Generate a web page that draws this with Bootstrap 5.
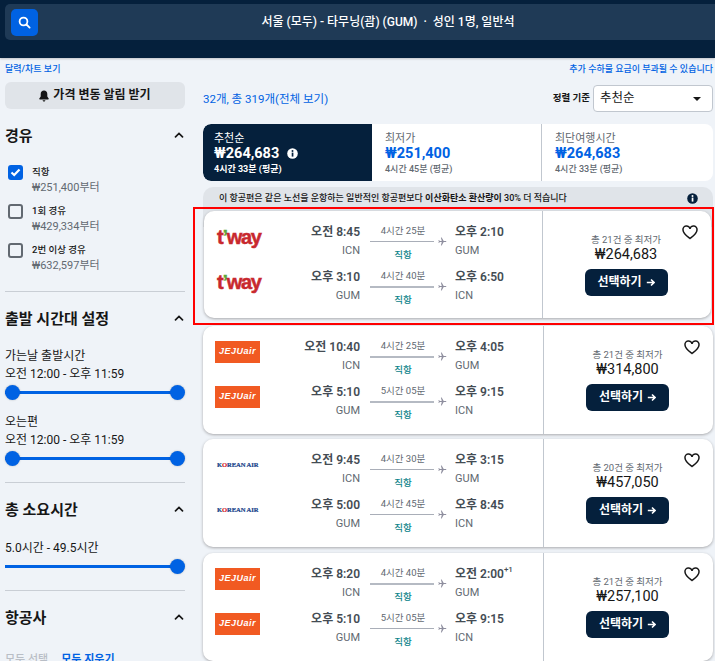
<!DOCTYPE html>
<html lang="ko">
<head>
<meta charset="utf-8">
<title>항공권 검색 결과</title>
<link href="https://cdn.jsdelivr.net/npm/bootstrap@5.3.0/dist/css/bootstrap.min.css" rel="stylesheet">
<style>
html,body{height:661px;overflow:hidden}
body{background:#eff3f8;color:#161616;font-family:Roboto,"Noto Sans CJK KR","Liberation Sans",sans-serif;font-size:12px;line-height:1.3}
.top-band{background:#05203c;height:58px;padding:4px 0 0 5px;box-shadow:0 1px 2px rgba(0,0,0,.2)}
.top-bar{background:#1f3a56;height:36px;border-radius:5px 0 0 5px;padding:5px 6px}
.search-btn{width:27px;height:27px;background:#0062e3;border-radius:5px;border:0;padding:0}
.route{color:#fff;font-size:12px;font-weight:500;margin-left:29px;padding-top:2px}
.links{padding:6px 2px 0 5px;height:24px;font-size:9px;font-weight:500;color:#0062e3}
.page-cols{padding:0 2px 0 5px}
.side{width:180px;flex:none}
.main-col{width:510px;margin-left:18px;flex:none}
.alert-btn{height:27px;background:#e0e4e9;border-radius:6px;font-size:12px;font-weight:700}
.side-head{height:22px;font-size:15px;font-weight:700;margin-top:15px}
.side-head span{padding-top:3px}
.chev{margin-right:1px}
.stops{margin-top:19px}
.stop{height:39px;padding-left:3px}
.chk{width:15px;height:15px;border:2px solid #626971;border-radius:3px;flex:none}
.chk-on{background:#0062e3;border-color:#0062e3}
.stop-text{margin-left:9px;font-size:9.5px;font-weight:500;line-height:14px}
.stop-price{font-size:11px;font-weight:400;color:#626971;line-height:17px}
.side-rule{border-top:1px solid #c9ced5;margin:0;opacity:1}
.rule-stops{margin-top:9px}
.label-line{font-size:12px;line-height:18px}
.first-label{margin-top:18px}
.next-label{margin-top:13px}
.total-label{margin-top:19px}
.range{height:15px;margin-top:2px}
.range-track{height:3px;background:#0062e3;top:6px;left:0;right:5px}
.range-knob{width:15px;height:15px;background:#0062e3;border-radius:50%;top:0;box-shadow:0 0 2px rgba(0,0,0,.25)}
.knob-left{left:0}
.knob-right{right:0}
.muted-link{color:#b9bec6;font-size:11px;font-weight:500}
.blue-link{color:#0062e3;font-size:11px;font-weight:700;margin-left:13px}
.count{font-size:11.5px;color:#0062e3;margin-top:10px}
.sort-row{margin-top:3px}
.sort-label{font-size:9.5px;font-weight:700;margin-right:3px}
.sort-box{width:120px;height:27px;background:#fff;border:1px solid #c1c7cf;border-radius:4px;font-size:12.5px;padding:0 11px 0 6px}
.caret{width:0;height:0;border-left:4px solid transparent;border-right:4px solid transparent;border-top:4px solid #161616}
.tabs{margin-top:12px;height:57px;background:#fff;border-radius:8px;overflow:hidden}
.tab-one{width:169px;background:#05203c;color:#fff;padding:8px 11px 0;border-radius:8px 0 0 8px}
.tab-two{width:170px;padding:8px 13px 0;border-right:1px solid #c1c7cf}
.tab-three{flex:1;padding:8px 13px 0}
.tab-title{font-size:11px;line-height:13px;color:#626971}
.tab-one .tab-title{color:#fff}
.tab-price{font-size:14.5px;font-weight:700;line-height:17px;color:#0062e3}
.tab-one .tab-price{color:#fff}
.tab-sub{font-size:9px;line-height:13px;color:#626971;font-weight:500;margin-top:1px}
.tab-one .tab-sub{color:#fff;font-weight:700}
.notice{background:#e0e4e9;border-radius:10px 10px 0 0;margin-top:6px;height:40px;padding:6px 15px 0 16px;font-size:9px;font-weight:500}
.notice b{font-weight:700}
.flagged{margin-top:-16px;margin-bottom:8px;position:relative}
.flagged::after{content:"";position:absolute;left:-10px;right:-1px;top:-4px;bottom:-7px;border:2px solid #f00;pointer-events:none}
.flight{background:#fff;border-radius:10px;height:108px;box-shadow:0 1px 3px rgba(37,32,31,.35);margin-bottom:6px;color:#161616}
.flight-tight{margin-bottom:5px}
.flagged .flight{margin:0 2px 0 1px;height:107px}
.flagged .legs{padding-left:11px}
.legs{flex:1;padding:12px 0 0 12px}
.leg{height:45px}
.logo-slot{width:45px;flex:none}
.logo-box{height:28px}
.dep{width:100px;flex:none;text-align:right}
.time{font-size:12px;font-weight:600;color:#444c54;line-height:18px;white-space:nowrap}
.code{font-size:11px;color:#626971;line-height:18px;margin-top:1px}
.mid{width:77px;margin:0 8px 0 10px;flex:none}
.dur{font-size:9.5px;color:#626971;text-align:center;width:66px;line-height:13px;margin-top:1px}
.line-row{height:9px}
.line-bar{width:66px;height:1px;background:#a9aeb8}
.line-heavy{height:2px;background:#b5bac3}
.direct{font-size:9.5px;color:#0c838a;text-align:center;width:66px;font-weight:500;line-height:13px;margin-top:2px}
.sup{font-size:8px;vertical-align:6px;font-weight:500;line-height:0}
.buy{width:170px;flex:none;border-left:1px solid #c1c7cf;padding:22px 2px 0 0}
.flagged .buy{width:169px}
.buy-note{font-size:9.5px;color:#626971;line-height:13px}
.buy-price{font-size:14.5px;line-height:18px;color:#161616}
.buy-btn{width:83px;height:27px;background:#05203c;color:#fff;border:0;border-radius:6px;font-size:12px;font-weight:700;padding:0;margin-top:5px}
.heart{position:absolute;top:14px;right:13px}
.logo-tway{font-family:"Liberation Sans",sans-serif;font-weight:700;font-size:20px;letter-spacing:-1.300px;color:#c8282e;line-height:1;margin-left:2px;-webkit-text-stroke:.5px #c8282e}
.logo-tway i{color:#5da83a;font-style:normal;-webkit-text-stroke:.3px #5da83a}
.logo-jeju{width:45px;height:22px;background:#f15a22;color:#fff;font-family:"Liberation Sans",sans-serif;font-weight:700;font-style:italic;font-size:9px;letter-spacing:.5px;margin-top:3px}
.logo-ke{font-family:"Liberation Serif",serif;font-weight:700;font-size:6.6px;color:#173f8a;white-space:nowrap;margin-left:2px;letter-spacing:-.1px;-webkit-text-stroke:.2px #173f8a}
.logo-ke i{font-style:normal;color:#d8232a;-webkit-text-stroke:.2px #d8232a}
</style>
</head>
<body>
<header class="top-band">
  <div class="top-bar d-flex align-items-center">
    <button class="search-btn d-flex align-items-center justify-content-center" aria-label="검색">
      <svg width="13" height="13" viewBox="0 0 13 13" fill="none" stroke="#fff" stroke-width="1.8"><circle cx="5.5" cy="5.5" r="3.9"/><path d="M8.5 8.5 11.6 11.6" stroke-linecap="round"/></svg>
    </button>
    <div class="route flex-grow-1 text-center">서울 (모두) - 타무닝(괌) (GUM) &nbsp;·&nbsp; 성인 1명, 일반석</div>
  </div>
</header>

<div class="links d-flex justify-content-between"><span>달력/차트 보기</span><span>추가 수하물 요금이 부과될 수 있습니다</span></div>

<div class="page-cols d-flex">
  <aside class="side">
    <div class="alert-btn d-flex align-items-center justify-content-center gap-1">
      <svg width="10" height="12" viewBox="0 0 10 12" fill="#161616"><path d="M5 0.5C3 .5 1.7 2 1.7 4v2.6L.3 8.6c-.2.4 0 .8.5.8h8.4c.5 0 .7-.4.5-.8L8.3 6.6V4C8.3 2 7 .5 5 .5z"/><path d="M3.6 10.2h2.8C6.3 11 5.7 11.5 5 11.5S3.700 11 3.600 10.200z"/></svg>
      <span>가격 변동 알림 받기</span>
    </div>

    <div class="side-head d-flex justify-content-between align-items-center"><span>경유</span>
      <svg width="10" height="6" viewBox="0 0 10 6" fill="none" stroke="#161616" stroke-width="1.7" class="chev"><path d="M1.500 4.800 5 1.500 8.500 4.800" stroke-linecap="round"/></svg></div>

    <div class="stops">
    <div class="stop d-flex">
      <div class="chk chk-on d-flex align-items-center justify-content-center"><svg width="11" height="9" viewBox="0 0 11 9" fill="none" stroke="#fff" stroke-width="2.2"><path d="M1.500 4.500 4.200 7 9.500 1.500"/></svg></div>
      <div class="stop-text">직항<div class="stop-price">₩251,400부터</div></div>
    </div>
    <div class="stop d-flex">
      <div class="chk"></div>
      <div class="stop-text">1회 경유<div class="stop-price">₩429,334부터</div></div>
    </div>
    <div class="stop d-flex">
      <div class="chk"></div>
      <div class="stop-text">2번 이상 경유<div class="stop-price">₩632,597부터</div></div>
    </div>
    </div>
    <hr class="side-rule rule-stops">

    <div class="side-head d-flex justify-content-between align-items-center"><span>출발 시간대 설정</span>
      <svg width="10" height="6" viewBox="0 0 10 6" fill="none" stroke="#161616" stroke-width="1.7" class="chev"><path d="M1.500 4.800 5 1.500 8.500 4.800" stroke-linecap="round"/></svg></div>

    <div class="label-line first-label">가는날 출발시간</div>
    <div class="label-line">오전 12:00 - 오후 11:59</div>
    <div class="range position-relative"><div class="range-track position-absolute"></div><div class="range-knob position-absolute knob-left"></div><div class="range-knob position-absolute knob-right"></div></div>

    <div class="label-line next-label">오는편</div>
    <div class="label-line">오전 12:00 - 오후 11:59</div>
    <div class="range position-relative"><div class="range-track position-absolute"></div><div class="range-knob position-absolute knob-left"></div><div class="range-knob position-absolute knob-right"></div></div>
    <hr class="side-rule mt-3">

    <div class="side-head d-flex justify-content-between align-items-center"><span>총 소요시간</span>
      <svg width="10" height="6" viewBox="0 0 10 6" fill="none" stroke="#161616" stroke-width="1.7" class="chev"><path d="M1.500 4.800 5 1.500 8.500 4.800" stroke-linecap="round"/></svg></div>

    <div class="label-line total-label">5.0시간 - 49.5시간</div>
    <div class="range position-relative"><div class="range-track position-absolute"></div><div class="range-knob position-absolute knob-right"></div></div>
    <hr class="side-rule mt-3">

    <div class="side-head d-flex justify-content-between align-items-center"><span>항공사</span>
      <svg width="10" height="6" viewBox="0 0 10 6" fill="none" stroke="#161616" stroke-width="1.7" class="chev"><path d="M1.500 4.800 5 1.500 8.500 4.800" stroke-linecap="round"/></svg></div>
    <div class="mt-3 pt-2"><span class="muted-link">모두 선택</span><span class="blue-link">모두 지우기</span></div>
  </aside>

  <main class="main-col">
    <div class="d-flex justify-content-between">
      <div class="count">32개, 총 319개(전체 보기)</div>
      <div class="d-flex align-items-center sort-row">
        <span class="sort-label">정렬 기준</span>
        <div class="sort-box d-flex align-items-center justify-content-between"><span>추천순</span><span class="caret"></span></div>
      </div>
    </div>

    <div class="tabs d-flex">
      <div class="tab-one">
        <div class="tab-title">추천순</div>
        <div class="tab-price d-flex align-items-center gap-1">₩264,683
          <svg width="11" height="11" viewBox="0 0 11 11" class="ms-1"><circle cx="5.500" cy="5.500" r="5.300" fill="#fff"/><rect x="4.700" y="4.600" width="1.700" height="4" fill="#05203c"/><circle cx="5.500" cy="2.900" r="1" fill="#05203c"/></svg></div>
        <div class="tab-sub">4시간 33분 (평균)</div>
      </div>
      <div class="tab-two">
        <div class="tab-title">최저가</div>
        <div class="tab-price">₩251,400</div>
        <div class="tab-sub">4시간 45분 (평균)</div>
      </div>
      <div class="tab-three">
        <div class="tab-title">최단여행시간</div>
        <div class="tab-price">₩264,683</div>
        <div class="tab-sub">4시간 33분 (평균)</div>
      </div>
    </div>

    <div class="notice d-flex justify-content-between">
      <span>이 항공편은 같은 노선을 운항하는 일반적인 항공편보다 <b>이산화탄소 환산량이</b> 30% 더 적습니다</span>
      <svg width="11" height="11" viewBox="0 0 11 11"><circle cx="5.500" cy="5.500" r="5.300" fill="#05203c"/><rect x="4.700" y="4.600" width="1.700" height="4" fill="#fff"/><circle cx="5.500" cy="2.900" r="1" fill="#fff"/></svg>
    </div>

    <div class="flagged">
      <article class="flight d-flex position-relative">
        <div class="legs">
          <div class="leg d-flex">
            <div class="logo-slot d-flex align-items-center logo-box"><span class="logo-tway">t<i>’</i>way</span></div>
            <div class="dep"><div class="time">오전 8:45</div><div class="code">ICN</div></div>
            <div class="mid"><div class="dur">4시간 25분</div><div class="line-row d-flex align-items-center gap-1"><div class="line-bar"></div><svg width="9" height="9" viewBox="0 0 10 10" fill="#8e8e9e"><path d="M9.600 5c0-.4-.5-.7-1-.7H6.500L4.200.3H3.300l1 4H2L1.200 3.300H.5L1 5 .5 6.700h.7L2 5.700h2.300l-1 4h.9l2.300-4h2.100c.5 0 1-.3 1-.7z"/></svg></div><div class="direct">직항</div></div>
            <div><div class="time">오후 2:10</div><div class="code">GUM</div></div>
          </div>
          <div class="leg d-flex">
            <div class="logo-slot d-flex align-items-center logo-box"><span class="logo-tway">t<i>’</i>way</span></div>
            <div class="dep"><div class="time">오후 3:10</div><div class="code">GUM</div></div>
            <div class="mid"><div class="dur">4시간 40분</div><div class="line-row d-flex align-items-center gap-1"><div class="line-bar line-heavy"></div><svg width="9" height="9" viewBox="0 0 10 10" fill="#8e8e9e"><path d="M9.600 5c0-.4-.5-.7-1-.7H6.500L4.200.3H3.300l1 4H2L1.200 3.300H.5L1 5 .5 6.700h.7L2 5.700h2.300l-1 4h.9l2.300-4h2.100c.5 0 1-.3 1-.7z"/></svg></div><div class="direct">직항</div></div>
            <div><div class="time">오후 6:50</div><div class="code">ICN</div></div>
          </div>
        </div>
        <div class="buy d-flex flex-column align-items-center">
          <div class="buy-note">총 21건 중 최저가</div>
          <div class="buy-price">₩264,683</div>
          <button class="buy-btn d-inline-flex align-items-center justify-content-center gap-1">선택하기<svg width="9" height="9" viewBox="0 0 9 9" fill="none" stroke="#fff" stroke-width="1.600"><path d="M.8 4.500h7M5 1.500l3 3-3 3"/></svg></button>
        </div>
        <svg class="heart" width="16" height="15" viewBox="0 0 16 15" fill="none" stroke="#161616" stroke-width="1.500"><path d="M8 13.500C5 11.200 1 8.500 1 5a3.500 3.500 0 0 1 7-1 3.500 3.500 0 0 1 7 1c0 3.500-4 6.200-7 8.500z"/></svg>
      </article>
    </div>

    <article class="flight flight-tight d-flex position-relative">
      <div class="legs">
        <div class="leg d-flex">
          <div class="logo-slot"><div class="logo-jeju d-flex align-items-center justify-content-center">JEJUair</div></div>
          <div class="dep"><div class="time">오전 10:40</div><div class="code">ICN</div></div>
          <div class="mid"><div class="dur">4시간 25분</div><div class="line-row d-flex align-items-center gap-1"><div class="line-bar line-heavy"></div><svg width="9" height="9" viewBox="0 0 10 10" fill="#8e8e9e"><path d="M9.600 5c0-.4-.5-.7-1-.7H6.500L4.200.3H3.300l1 4H2L1.200 3.300H.5L1 5 .5 6.700h.7L2 5.700h2.300l-1 4h.9l2.300-4h2.100c.5 0 1-.3 1-.7z"/></svg></div><div class="direct">직항</div></div>
          <div><div class="time">오후 4:05</div><div class="code">GUM</div></div>
        </div>
        <div class="leg d-flex">
          <div class="logo-slot"><div class="logo-jeju d-flex align-items-center justify-content-center">JEJUair</div></div>
          <div class="dep"><div class="time">오후 5:10</div><div class="code">GUM</div></div>
          <div class="mid"><div class="dur">5시간 05분</div><div class="line-row d-flex align-items-center gap-1"><div class="line-bar line-heavy"></div><svg width="9" height="9" viewBox="0 0 10 10" fill="#8e8e9e"><path d="M9.600 5c0-.4-.5-.7-1-.7H6.500L4.200.3H3.300l1 4H2L1.200 3.300H.5L1 5 .5 6.700h.7L2 5.700h2.300l-1 4h.9l2.300-4h2.100c.5 0 1-.3 1-.7z"/></svg></div><div class="direct">직항</div></div>
          <div><div class="time">오후 9:15</div><div class="code">ICN</div></div>
        </div>
      </div>
      <div class="buy d-flex flex-column align-items-center">
        <div class="buy-note">총 21건 중 최저가</div>
        <div class="buy-price">₩314,800</div>
        <button class="buy-btn d-inline-flex align-items-center justify-content-center gap-1">선택하기<svg width="9" height="9" viewBox="0 0 9 9" fill="none" stroke="#fff" stroke-width="1.600"><path d="M.8 4.500h7M5 1.500l3 3-3 3"/></svg></button>
      </div>
      <svg class="heart" width="16" height="15" viewBox="0 0 16 15" fill="none" stroke="#161616" stroke-width="1.500"><path d="M8 13.500C5 11.200 1 8.500 1 5a3.500 3.500 0 0 1 7-1 3.500 3.500 0 0 1 7 1c0 3.500-4 6.200-7 8.500z"/></svg>
    </article>

    <article class="flight d-flex position-relative">
      <div class="legs">
        <div class="leg d-flex">
          <div class="logo-slot d-flex align-items-center logo-box"><span class="logo-ke">K<i>O</i>REAN AIR</span></div>
          <div class="dep"><div class="time">오전 9:45</div><div class="code">ICN</div></div>
          <div class="mid"><div class="dur">4시간 30분</div><div class="line-row d-flex align-items-center gap-1"><div class="line-bar"></div><svg width="9" height="9" viewBox="0 0 10 10" fill="#8e8e9e"><path d="M9.600 5c0-.4-.5-.7-1-.7H6.500L4.200.3H3.300l1 4H2L1.200 3.300H.5L1 5 .5 6.700h.7L2 5.700h2.300l-1 4h.9l2.300-4h2.100c.5 0 1-.3 1-.7z"/></svg></div><div class="direct">직항</div></div>
          <div><div class="time">오후 3:15</div><div class="code">GUM</div></div>
        </div>
        <div class="leg d-flex">
          <div class="logo-slot d-flex align-items-center logo-box"><span class="logo-ke">K<i>O</i>REAN AIR</span></div>
          <div class="dep"><div class="time">오후 5:00</div><div class="code">GUM</div></div>
          <div class="mid"><div class="dur">4시간 45분</div><div class="line-row d-flex align-items-center gap-1"><div class="line-bar"></div><svg width="9" height="9" viewBox="0 0 10 10" fill="#8e8e9e"><path d="M9.600 5c0-.4-.5-.7-1-.7H6.500L4.200.3H3.300l1 4H2L1.200 3.300H.5L1 5 .5 6.700h.7L2 5.700h2.300l-1 4h.9l2.300-4h2.100c.5 0 1-.3 1-.7z"/></svg></div><div class="direct">직항</div></div>
          <div><div class="time">오후 8:45</div><div class="code">ICN</div></div>
        </div>
      </div>
      <div class="buy d-flex flex-column align-items-center">
        <div class="buy-note">총 20건 중 최저가</div>
        <div class="buy-price">₩457,050</div>
        <button class="buy-btn d-inline-flex align-items-center justify-content-center gap-1">선택하기<svg width="9" height="9" viewBox="0 0 9 9" fill="none" stroke="#fff" stroke-width="1.600"><path d="M.8 4.500h7M5 1.500l3 3-3 3"/></svg></button>
      </div>
      <svg class="heart" width="16" height="15" viewBox="0 0 16 15" fill="none" stroke="#161616" stroke-width="1.500"><path d="M8 13.500C5 11.200 1 8.500 1 5a3.500 3.500 0 0 1 7-1 3.500 3.500 0 0 1 7 1c0 3.500-4 6.200-7 8.500z"/></svg>
    </article>

    <article class="flight d-flex position-relative">
      <div class="legs">
        <div class="leg d-flex">
          <div class="logo-slot"><div class="logo-jeju d-flex align-items-center justify-content-center">JEJUair</div></div>
          <div class="dep"><div class="time">오후 8:20</div><div class="code">ICN</div></div>
          <div class="mid"><div class="dur">4시간 40분</div><div class="line-row d-flex align-items-center gap-1"><div class="line-bar line-heavy"></div><svg width="9" height="9" viewBox="0 0 10 10" fill="#8e8e9e"><path d="M9.600 5c0-.4-.5-.7-1-.7H6.500L4.200.3H3.300l1 4H2L1.200 3.300H.5L1 5 .5 6.700h.7L2 5.700h2.300l-1 4h.9l2.300-4h2.100c.5 0 1-.3 1-.7z"/></svg></div><div class="direct">직항</div></div>
          <div><div class="time">오전 2:00<span class="sup">+1</span></div><div class="code">GUM</div></div>
        </div>
        <div class="leg d-flex">
          <div class="logo-slot"><div class="logo-jeju d-flex align-items-center justify-content-center">JEJUair</div></div>
          <div class="dep"><div class="time">오후 5:10</div><div class="code">GUM</div></div>
          <div class="mid"><div class="dur">5시간 05분</div><div class="line-row d-flex align-items-center gap-1"><div class="line-bar"></div><svg width="9" height="9" viewBox="0 0 10 10" fill="#8e8e9e"><path d="M9.600 5c0-.4-.5-.7-1-.7H6.500L4.200.3H3.300l1 4H2L1.200 3.300H.5L1 5 .5 6.700h.7L2 5.700h2.300l-1 4h.9l2.300-4h2.100c.5 0 1-.3 1-.7z"/></svg></div><div class="direct">직항</div></div>
          <div><div class="time">오후 9:15</div><div class="code">ICN</div></div>
        </div>
      </div>
      <div class="buy d-flex flex-column align-items-center">
        <div class="buy-note">총 21건 중 최저가</div>
        <div class="buy-price">₩257,100</div>
        <button class="buy-btn d-inline-flex align-items-center justify-content-center gap-1">선택하기<svg width="9" height="9" viewBox="0 0 9 9" fill="none" stroke="#fff" stroke-width="1.600"><path d="M.8 4.500h7M5 1.500l3 3-3 3"/></svg></button>
      </div>
      <svg class="heart" width="16" height="15" viewBox="0 0 16 15" fill="none" stroke="#161616" stroke-width="1.500"><path d="M8 13.500C5 11.200 1 8.500 1 5a3.500 3.500 0 0 1 7-1 3.500 3.500 0 0 1 7 1c0 3.500-4 6.200-7 8.500z"/></svg>
    </article>
  </main>
</div>
</body>
</html>
